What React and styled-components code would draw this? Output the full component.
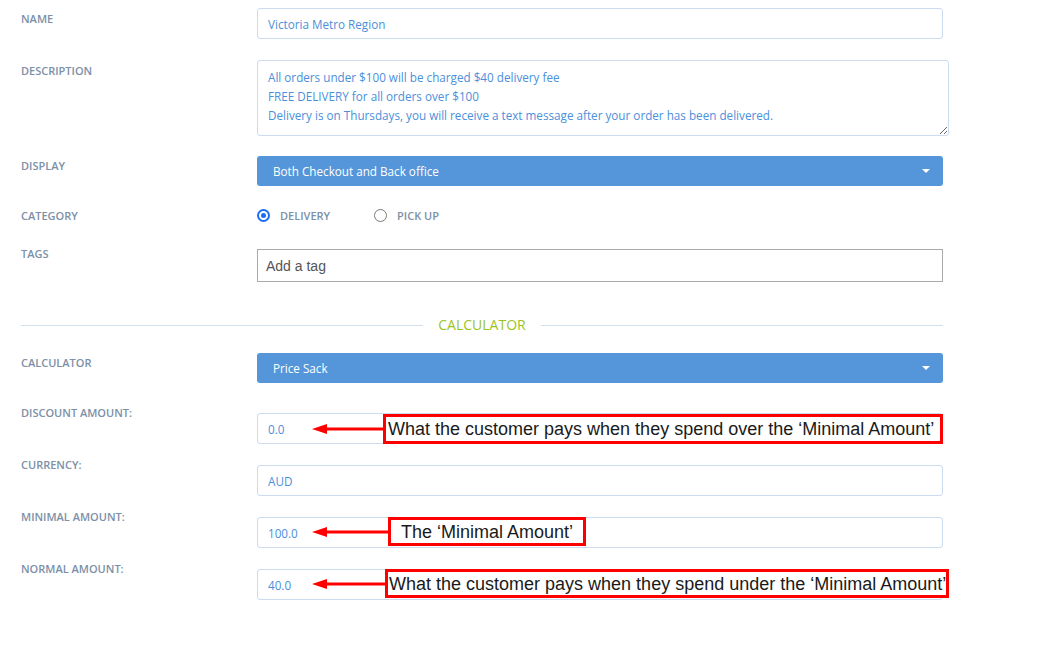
import React from "react";
import styled, { createGlobalStyle } from "styled-components";

const GlobalStyle = createGlobalStyle`
  body {
    margin: 0;
    background: #fff;
    font-family: "Open Sans", "Liberation Sans", sans-serif;
  }
`;

const Page = styled.div`
  padding: 8px 0 40px 21px;
`;

const Row = styled.div`
  display: grid;
  grid-template-columns: 236px 686px;
  align-items: start;
  margin-top: ${(p) => p.$gap || 0}px;
`;

const Label = styled.div`
  font-size: 11px;
  line-height: 15px;
  font-weight: 600;
  color: #7c90a7;
  text-transform: uppercase;
  margin-top: ${(p) => p.$shift || 0}px;
`;

const Field = styled.div`
  position: relative;
`;

const TextInput = styled.input`
  display: block;
  width: 100%;
  height: 31px;
  box-sizing: border-box;
  border: 1px solid #cbdcee;
  border-radius: 3px;
  padding: 1px 10px 0;
  font-family: "Open Sans", sans-serif;
  font-size: 11.7px;
  color: #4b8fdb;
  background: #fff;
  outline: none;
`;

const TextArea = styled.textarea`
  display: block;
  width: 692px;
  height: 76px;
  box-sizing: border-box;
  border: 1px solid #cbdcee;
  border-radius: 3px;
  padding: 7px 10px 0;
  font-family: "Open Sans", sans-serif;
  font-size: 11.7px;
  line-height: 19px;
  color: #4b8fdb;
  outline: none;
`;

const Select = styled.div`
  height: 30px;
  box-sizing: border-box;
  background: #5596da;
  border-radius: 3px;
  padding: 0 13px 0 16px;
  display: flex;
  align-items: center;
  justify-content: space-between;
  color: #fff;
  font-size: 11.7px;
`;

const Caret = styled.span`
  width: 0;
  height: 0;
  border-left: 4px solid transparent;
  border-right: 4px solid transparent;
  border-top: 4px solid #fff;
`;

const RadioGroup = styled.div`
  display: flex;
  align-items: center;
  height: 18px;
`;

const RadioOption = styled.label`
  display: flex;
  align-items: center;
  gap: 10px;
  margin-right: 44px;
  font-size: 11px;
  font-weight: 600;
  color: #7c90a7;
`;

const RadioDot = styled.span`
  width: 13px;
  height: 13px;
  box-sizing: border-box;
  border-radius: 50%;
  border: ${(p) => (p.$on ? "2px solid #1a6ef5" : "1px solid #7a7a7a")};
  display: flex;
  align-items: center;
  justify-content: center;
  &::after {
    content: "";
    width: 5px;
    height: 5px;
    border-radius: 50%;
    background: ${(p) => (p.$on ? "#1a6ef5" : "transparent")};
  }
`;

const TagBox = styled.div`
  height: 33px;
  box-sizing: border-box;
  border: 1px solid #aaa;
  padding: 0 8px;
  display: flex;
  align-items: center;
  font-family: "Liberation Sans", Arial, sans-serif;
  font-size: 14px;
  color: #555;
`;

const Divider = styled.div`
  width: 922px;
  display: flex;
  align-items: center;
  gap: 15px;
  margin-top: 34px;
  &::before,
  &::after {
    content: "";
    flex: 1;
    height: 1px;
    background: #d3dfeb;
  }
`;

const DividerTitle = styled.span`
  font-size: 14px;
  line-height: 18px;
  color: #9cc41e;
`;

const Callout = styled.div`
  position: absolute;
  left: 55px;
  top: ${(p) => p.$top || 0}px;
  display: flex;
  align-items: center;
`;

const Note = styled.div`
  width: ${(p) => p.$width}px;
  height: ${(p) => p.$height}px;
  box-sizing: border-box;
  border: 3px solid #f00;
  background: #fff;
  padding: 1px 0 0 ${(p) => p.$pad}px;
  display: flex;
  align-items: center;
  white-space: nowrap;
  font-family: "Liberation Sans", Arial, sans-serif;
  font-size: 18px;
  color: #1a1a1a;
`;

const Arrow = ({ length }) => (
  <svg width={length} height="12" viewBox={`0 0 ${length} 12`}>
    <polygon points="0,6 15,1 15,11" fill="#f00" />
    <rect x="14" y="4.5" width={length - 14} height="3" fill="#f00" />
  </svg>
);

const Annotation = ({ top, arrow, width, height, pad, children }) => (
  <Callout $top={top}>
    <Arrow length={arrow} />
    <Note $width={width} $height={height} $pad={pad}>
      {children}
    </Note>
  </Callout>
);

export default function App() {
  return (
    <Page>
      <GlobalStyle />
      <Row>
        <Label $shift={3}>Name</Label>
        <Field>
          <TextInput readOnly value="Victoria Metro Region" />
        </Field>
      </Row>
      <Row $gap={21}>
        <Label $shift={3}>Description</Label>
        <Field>
          <TextArea
            readOnly
            value={
              "All orders under $100 will be charged $40 delivery fee\nFREE DELIVERY for all orders over $100\nDelivery is on Thursdays, you will receive a text message after your order has been delivered."
            }
          />
        </Field>
      </Row>
      <Row $gap={20}>
        <Label $shift={2}>Display</Label>
        <Select>
          <span>Both Checkout and Back office</span>
          <Caret />
        </Select>
      </Row>
      <Row $gap={20}>
        <Label $shift={2}>Category</Label>
        <RadioGroup>
          <RadioOption>
            <RadioDot $on />
            DELIVERY
          </RadioOption>
          <RadioOption>
            <RadioDot />
            PICK UP
          </RadioOption>
        </RadioGroup>
      </Row>
      <Row $gap={25}>
        <Label $shift={-3}>Tags</Label>
        <TagBox>Add a tag</TagBox>
      </Row>

      <Divider>
        <DividerTitle>CALCULATOR</DividerTitle>
      </Divider>

      <Row $gap={19}>
        <Label $shift={2}>Calculator</Label>
        <Select>
          <span>Price Sack</span>
          <Caret />
        </Select>
      </Row>
      <Row $gap={30}>
        <Label $shift={-8}>Discount amount:</Label>
        <Field>
          <TextInput readOnly value="0.0" />
          <Annotation top={1} arrow={71} width={560} height={30} pad={2}>
            What the customer pays when they spend over the ‘Minimal Amount’
          </Annotation>
        </Field>
      </Row>
      <Row $gap={21}>
        <Label $shift={-8}>Currency:</Label>
        <Field>
          <TextInput readOnly value="AUD" />
        </Field>
      </Row>
      <Row $gap={21}>
        <Label $shift={-8}>Minimal amount:</Label>
        <Field>
          <TextInput readOnly value="100.0" />
          <Annotation top={0} arrow={76} width={198} height={29} pad={10}>
            The ‘Minimal Amount’
          </Annotation>
        </Field>
      </Row>
      <Row $gap={21}>
        <Label $shift={-8}>Normal amount:</Label>
        <Field>
          <TextInput readOnly value="40.0" />
          <Annotation top={0} arrow={73} width={564} height={29} pad={1}>
            What the customer pays when they spend under the ‘Minimal Amount’
          </Annotation>
        </Field>
      </Row>
    </Page>
  );
}
